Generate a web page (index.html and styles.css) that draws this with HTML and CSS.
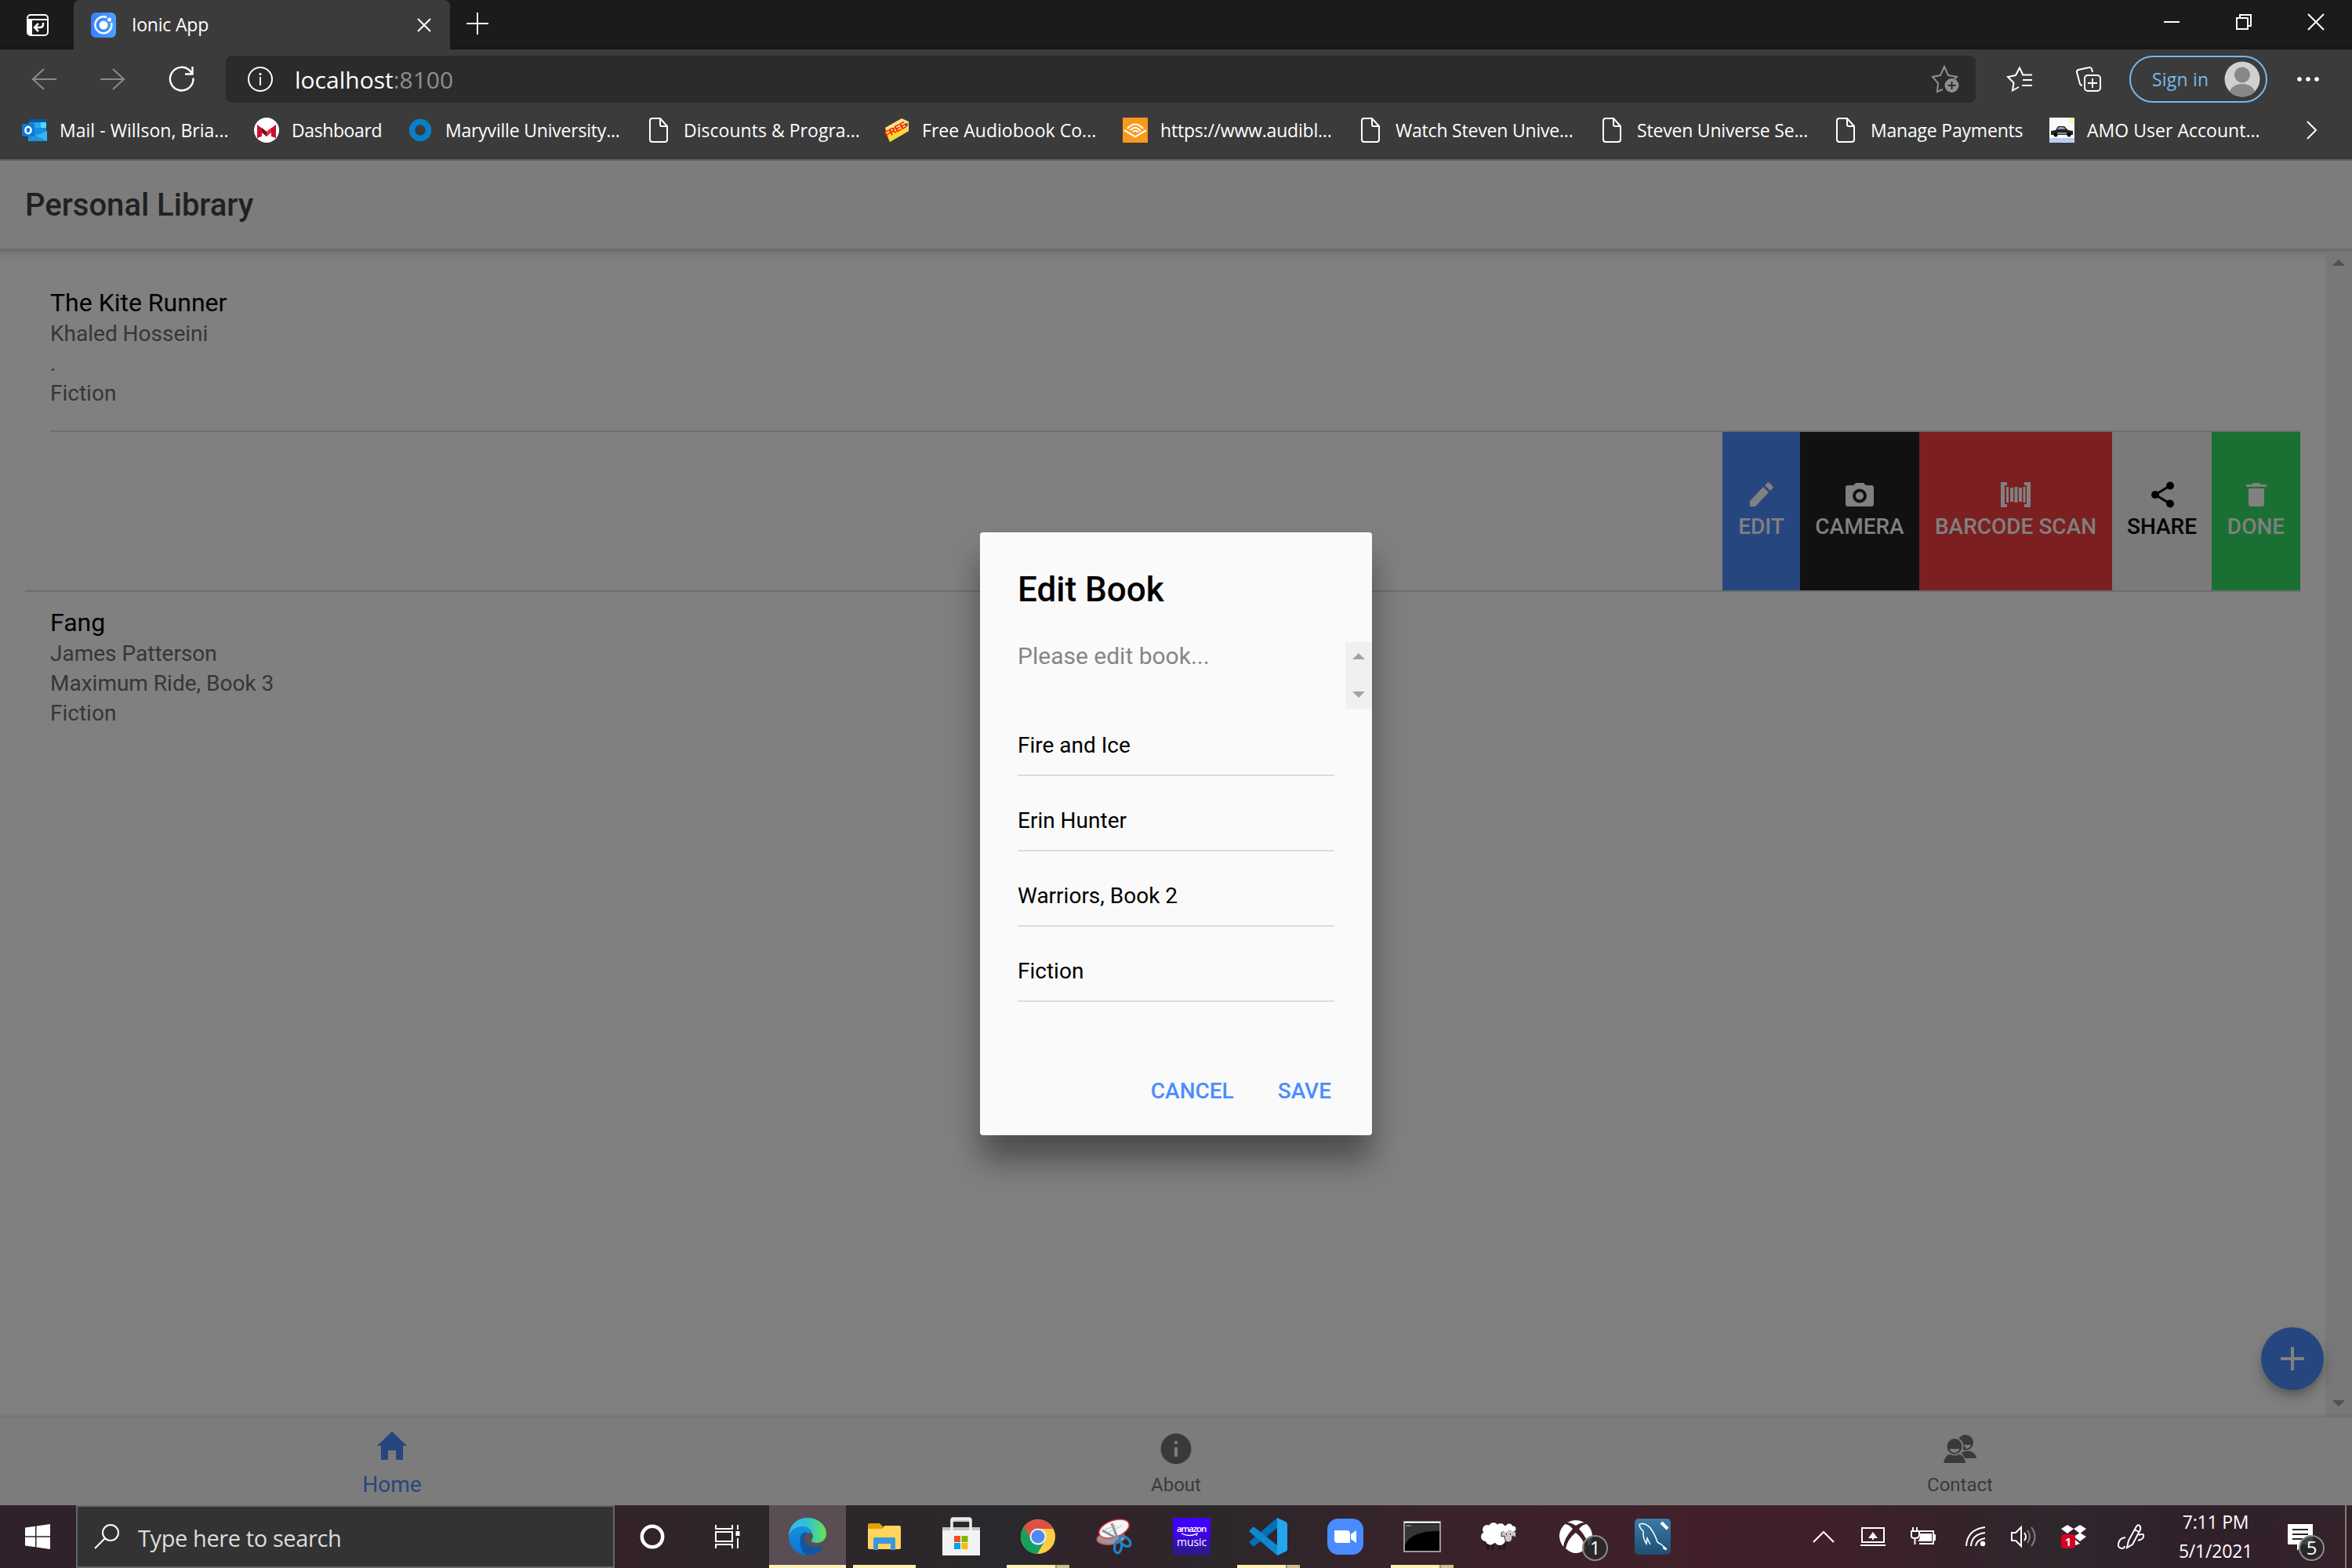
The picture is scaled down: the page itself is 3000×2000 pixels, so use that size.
FILE: index.html
```html
<!DOCTYPE html>
<html lang="en">
<head>
<meta charset="utf-8">
<title>Ionic App</title>
<link rel="stylesheet" href="styles.css">
</head>
<body>
<div class="screen">
  <header class="tabstrip">
    <svg class="tab-actions" width="28" height="28" viewBox="0 0 28 28" fill="none" stroke="#fff" stroke-width="2"><rect x="1" y="1" width="26" height="26" rx="4"/><path d="M1 7h26M6 7v20" stroke-width="2"/><path d="M2 8h4v18H2z" fill="#fff" stroke="none"/><path d="M21 11v2q0 4-4 4h-6M15 12l-5 5 5 5" stroke-width="2.500"/></svg>
    <div class="tab">
      <svg width="32" height="32" viewBox="0 0 32 32"><defs><linearGradient id="ion"><stop offset="0" stop-color="#3880ff"/><stop offset="1" stop-color="#4c9fff"/></linearGradient></defs><rect width="32" height="32" rx="6" fill="url(#ion)"/><circle cx="16" cy="16" r="5.500" fill="#fff"/><path d="M20 6.200A10.500 10.500 0 1 0 26 13" fill="none" stroke="#fff" stroke-width="2.400"/><circle cx="23.500" cy="9" r="2.500" fill="#fff"/></svg>
      <span class="tab-title">Ionic App</span>
      <svg class="tab-close" width="18" height="18" viewBox="0 0 18 18" stroke="#fff" stroke-width="2"><path d="M1 1l16 16M17 1L1 17"/></svg>
    </div>
    <svg class="new-tab" width="28" height="28" viewBox="0 0 28 28" stroke="#fff" stroke-width="2"><path d="M14 0v28M0 14h28"/></svg>
    <div class="window-buttons">
      <svg width="20" height="20" viewBox="0 0 20 20" stroke="#fff" stroke-width="2"><path d="M0 10h20"/></svg>
      <svg width="20" height="20" viewBox="0 0 20 20" fill="none" stroke="#fff" stroke-width="2"><path d="M1 5h14v14H1zM5 5V1h14v14h-4"/></svg>
      <svg width="20" height="20" viewBox="0 0 20 20" stroke="#fff" stroke-width="2"><path d="M0 0l20 20M20 0L0 20"/></svg>
    </div>
  </header>

  <div class="toolbar">
    <div class="nav-buttons">
      <svg width="32" height="28" viewBox="0 0 32 28" fill="none" stroke="#8b8b8b" stroke-width="2"><path d="M16 1L2 14l14 13M1 14h31"/></svg>
      <svg width="32" height="28" viewBox="0 0 32 28" fill="none" stroke="#8b8b8b" stroke-width="2"><path d="M16 1l14 13-14 13M31 14H0"/></svg>
      <svg width="32" height="32" viewBox="0 0 32 32" fill="none" stroke="#fff" stroke-width="2.400"><path d="M30.500 14.500A14.800 14.800 0 1 1 27 6l2 3M29.500 0v9.500H20"/></svg>
    </div>
    <div class="address">
      <svg width="32" height="32" viewBox="0 0 32 32" fill="none" stroke="#fff" stroke-width="2"><circle cx="16" cy="16" r="15"/><path d="M16 13v11"/><circle cx="16" cy="9.500" r="1.600" fill="#fff" stroke="none"/></svg>
      <span class="url">localhost<span class="port">:8100</span></span>
      <svg class="add-star" width="36" height="36" viewBox="0 0 36 36" fill="none" stroke="#8f8f8f" stroke-width="2"><path d="M14 31l-7 3 1-11-7-8 10-2 5-11 5 11 11 2-3 3"/><circle cx="25.500" cy="26" r="9" fill="#8f8f8f" stroke="none"/><path d="M25.500 21v10M20.500 26h10" stroke="#2b2b2b"/></svg>
    </div>
    <svg class="favorites" width="32" height="32" viewBox="0 0 32 32" fill="none" stroke="#fff" stroke-width="2"><path d="M15 26l-8 4.500 1.500-10L1 13l10-2 5-9.500 4 8.500M19 10.500h13M20 17h12M19 24h13"/></svg>
    <svg class="collections" width="32" height="32" viewBox="0 0 32 32" fill="none" stroke="#fff" stroke-width="2"><rect x="11" y="11" width="20" height="20" rx="4"/><path d="M21 15v12M15 21h12M21 7l-1-4q-1-2.500-3-2L3 4Q.5 5 1 7l4 15q1 2 3 2"/></svg>
    <div class="signin"><span>Sign in</span>
      <svg width="46" height="46" viewBox="0 0 46 46"><defs><clipPath id="av"><circle cx="23" cy="23" r="22.500"/></clipPath></defs><circle cx="23" cy="23" r="22.500" fill="#d2d0ce"/><g fill="#8a8886" clip-path="url(#av)"><circle cx="23" cy="17.500" r="10"/><ellipse cx="23" cy="43" rx="17" ry="14"/></g></svg>
    </div>
    <svg class="more" width="28" height="8" viewBox="0 0 28 8" fill="#fff"><circle cx="3" cy="4" r="2.800"/><circle cx="14" cy="4" r="2.800"/><circle cx="25" cy="4" r="2.800"/></svg>
  </div>

  <nav class="bookmarks">
    <div class="bookmark loose"><svg width="32" height="32" viewBox="0 0 32 32"><path d="M9 2h22v26H9z" fill="#1490df"/><path d="M9 2h22v4H9z" fill="#0858a8"/><path d="M16 6h8v7h-8z" fill="#28a8ea"/><path d="M24 6h7v7h-7z" fill="#50d9ff"/><path d="M8 17l12 6 12-6v13H8z" fill="#1d93e0"/><path d="M32 17v13L18 23z" fill="#35b8f1"/><rect y="8" width="16" height="16" rx="1.500" fill="#0f78d4"/><ellipse cx="8" cy="16" rx="3.600" ry="4.200" fill="none" stroke="#fff" stroke-width="2.400"/></svg><span>Mail - Willson, Bria...</span></div>
    <div class="bookmark tight"><svg width="32" height="32" viewBox="0 0 32 32"><circle cx="16" cy="16" r="16" fill="#fff"/><path d="M4 9l12 9v6l-6-5v5l-6 2z" fill="#c8102e"/><path d="M28 9l-12 9v6l6-5v5l6 2z" fill="#c8102e"/><path d="M10 13l6 5v6l-6-5z" fill="#7a0c1e"/><path d="M22 13l-6 5v6l6-5z" fill="#e22b42"/></svg><span>Dashboard</span></div>
    <div class="bookmark"><svg width="32" height="32" viewBox="0 0 32 32"><circle cx="16" cy="16" r="10.500" fill="none" stroke="#0a7fc6" stroke-width="7.500"/></svg><span>Maryville University...</span></div>
    <div class="bookmark loose"><svg class="page" width="32" height="32" viewBox="0 0 32 32"><path d="M8 1h10l9 10v17q0 3-3 3H8q-3 0-3-3V4q0-3 3-3zM18 1v8q0 2 2 2h7"/></svg><span>Discounts &amp; Progra...</span></div>
    <div class="bookmark loose"><svg width="32" height="32" viewBox="0 0 32 32"><path d="M1 13L22 1l9 4v12L7 31z" fill="#ffe082"/><path d="M1 17l26-6 4 6L7 31z" fill="#fdd835"/><circle cx="28" cy="9" r="2" fill="#555"/><text x="2" y="26" class="free-tag" transform="rotate(-29 3 25)">FREE</text></svg><span>Free Audiobook Co...</span></div>
    <div class="bookmark"><svg width="32" height="32" viewBox="0 0 32 32"><path d="M0 0h32v32H0z" fill="#f8991c"/><g fill="none" stroke="#fff" stroke-width="2.200"><path d="M2 16l14 8.500L30 16"/><path d="M6 14q10-11 20 0M9.500 16q7-7 13 1M13 18q4-3 6.500 1"/></g></svg><span>https://www.audibl...</span></div>
    <div class="bookmark"><svg class="page" width="32" height="32" viewBox="0 0 32 32"><path d="M8 1h10l9 10v17q0 3-3 3H8q-3 0-3-3V4q0-3 3-3zM18 1v8q0 2 2 2h7"/></svg><span>Watch Steven Unive...</span></div>
    <div class="bookmark"><svg class="page" width="32" height="32" viewBox="0 0 32 32"><path d="M8 1h10l9 10v17q0 3-3 3H8q-3 0-3-3V4q0-3 3-3zM18 1v8q0 2 2 2h7"/></svg><span>Steven Universe Se...</span></div>
    <div class="bookmark"><svg class="page" width="32" height="32" viewBox="0 0 32 32"><path d="M8 1h10l9 10v17q0 3-3 3H8q-3 0-3-3V4q0-3 3-3zM18 1v8q0 2 2 2h7"/></svg><span>Manage Payments</span></div>
    <div class="bookmark loose"><svg width="32" height="32" viewBox="0 0 32 32"><path d="M0 0h32v32H0z" fill="#fafafa"/><path d="M24 0h8v7h-6z" fill="#fff2b8"/><path d="M0 26h32v6H0z" fill="#b9cdf2"/><path d="M2 17l6-1 3-5h8l5 5 6 1v5H2z" fill="#222"/><path d="M10 15l2-3h6l3 3z" fill="#998fb0"/><path d="M10 19h12v2H10z" fill="#7d9a8c"/><circle cx="8" cy="22" r="2.500"/><circle cx="25" cy="22" r="2.500"/></svg><span>AMO User Account...</span></div>
    <svg class="overflow" width="14" height="24" viewBox="0 0 14 24" fill="none" stroke="#fff" stroke-width="2"><path d="M1 1l11 11L1 23"/></svg>
  </nav>

  <main class="app">
    <div class="app-header"><h1>Personal Library</h1></div>
    <div class="content">
      <div class="list">
        <div class="item first"><h2>The Kite Runner</h2><p>Khaled Hosseini</p><p>.</p><p>Fiction</p></div>
        <div class="item options">
          <div class="option edit"><svg width="34" height="34" viewBox="0 0 34 34"><path d="M2 25v7h7l17-18-7-7zM21 5l7 7 3-3q1.500-1.500 0-3l-4-4q-1.500-1.500-3 0z"/></svg>Edit</div>
          <div class="option camera"><svg width="36" height="34" viewBox="0 0 36 34"><path fill-rule="evenodd" d="M13 2h10l3 3h7q3 0 3 3v21q0 3-3 3H3q-3 0-3-3V8q0-3 3-3h7zM18 9.500a9 9 0 1 0 0 18 9 9 0 0 0 0-18zm0 4a5 5 0 1 1 0 10 5 5 0 0 1 0-10z"/></svg>Camera</div>
          <div class="option barcode"><svg width="38" height="34" viewBox="0 0 38 34"><path d="M0 1h8v4H5v24h3v4H0zM38 1h-8v4h3v24h-3v4h8zM7 7h3v20H7zM12 8h4v18h-4zM17.500 7h4v20h-4zM23 8h4v18h-4zM28.500 7h3v20h-3z"/></svg>Barcode Scan</div>
          <div class="option share"><svg width="32" height="34" viewBox="0 0 32 34"><circle cx="7" cy="17" r="5"/><circle cx="26" cy="5.500" r="5"/><circle cx="26" cy="28.500" r="5"/><path d="M26 5.500L7 17l19 11.500" fill="none" stroke="#000" stroke-width="3"/></svg>Share</div>
          <div class="option done"><svg width="28" height="34" viewBox="0 0 28 34"><path d="M1 7V4h7l2-2h8l2 2h7v3zM4 9h20v20q0 3-3 3H7q-3 0-3-3z"/></svg>Done</div>
        </div>
        <div class="item"><h2>Fang</h2><p>James Patterson</p><p>Maximum Ride, Book 3</p><p>Fiction</p></div>
      </div>
      <div class="scrollbar"><i class="up"></i><i class="down"></i></div>
      <button class="fab"><svg width="32" height="32" viewBox="0 0 32 32" stroke="#808080" stroke-width="4"><path d="M16 1v30M1 16h30"/></svg></button>
    </div>
    <div class="app-tabs">
      <div class="app-tab selected"><svg width="48" height="48" viewBox="0 0 48 48"><path d="M10 40V22H5L24 4l19 18h-5v18h-9V28H19v12z"/></svg><span>Home</span></div>
      <div class="app-tab"><svg width="48" height="48" viewBox="0 0 48 48"><path fill-rule="evenodd" d="M24 6.500a19.500 19.500 0 1 0 0 39 19.500 19.500 0 0 0 0-39zM22 16h4v4h-4zM22 24h4v12h-4z"/></svg><span>About</span></div>
      <div class="app-tab"><svg width="48" height="48" viewBox="0 0 48 48"><ellipse cx="31" cy="18" rx="10" ry="10"/><path d="M26 31q5-3 11-2 7 2 8 9H30z"/><path d="M29 21h9q-1 4-6 5z" fill="#7c7c7c"/><ellipse cx="17" cy="23" rx="11.500" ry="11.500" fill="#7c7c7c"/><ellipse cx="17" cy="23" rx="9.500" ry="10"/><path d="M10.500 26h13q-2 5-6.500 5t-6.500-5z" fill="#7c7c7c"/><path d="M3 44q2-10 8-11 6 3 12 0 6 1 8 11z"/></svg><span>Contact</span></div>
    </div>

    <section class="dialog">
      <h2>Edit Book</h2>
      <div class="message"><span>Please edit book...</span><div class="message-scroll"><i class="up"></i><i class="down"></i></div></div>
      <div class="fields">
        <div class="field">Fire and Ice</div>
        <div class="field">Erin Hunter</div>
        <div class="field">Warriors, Book 2</div>
        <div class="field">Fiction</div>
      </div>
      <div class="dialog-buttons"><span>Cancel</span><span>Save</span></div>
    </section>
  </main>

  <footer class="taskbar">
    <div class="start"><svg width="32" height="32" viewBox="0 0 32 32" fill="#fff"><path d="M0 4.500l13-1.800V15.300H0zM14.500 2.500L32 0v15.300H14.500zM0 16.700h13v12.600L0 27.500zM14.500 16.700H32V32l-17.500-2.500z"/></svg></div>
    <div class="search"><svg width="32" height="32" viewBox="0 0 32 32" fill="none" stroke="#fff" stroke-width="2"><circle cx="21" cy="11" r="10"/><path d="M14 18L1 31"/></svg><span>Type here to search</span></div>
    <div class="sys"><svg width="34" height="34" viewBox="0 0 34 34" fill="none" stroke="#fff" stroke-width="4.500"><circle cx="17" cy="17" r="13.200"/></svg></div>
    <div class="sys"><svg width="34" height="30" viewBox="0 0 34 30" fill="none" stroke="#fff" stroke-width="2"><path d="M2 0v5h21V0M2 30v-5h21v5M2 9h21v12H2zM30 0v6M30 17v13"/><path d="M27.500 8h5v6h-5z" fill="#fff" stroke="none"/></svg></div>
    <div class="apps">
      <div class="task active wide"><svg width="48" height="48" viewBox="0 0 48 48"><defs><linearGradient id="e1" x1="0" x2="1"><stop offset="0" stop-color="#35b8f5"/><stop offset=".5" stop-color="#2cc3d0"/><stop offset="1" stop-color="#6be450"/></linearGradient><linearGradient id="e2" x1="0" y1="0" x2="0" y2="1"><stop offset="0" stop-color="#1790dc"/><stop offset="1" stop-color="#0b74d4"/></linearGradient></defs><path d="M0 24C0 9 11 0 24 0s24 9 24 20c0 8-6 12-12 12-7 0-8-2-6-5 3-6-2-14-12-15C9 11 3 15 0 24z" fill="url(#e1)"/><path d="M0 24C2 16 9 11 17 11c8 0 13 5 13 10-4-4-11-1-11 6 0 10 8 17 17 17-4 3-8 4-12 4C11 48 0 37 0 24z" fill="url(#e2)"/><path d="M15 24c1-3 4-6 9-5-5 3-5 9-2 13 5 6 14 7 21 4 1-.5 2 0 1 1-4 7-12 11-19 11-7-1-12-10-10-24z" fill="#1155a4"/></svg></div>
      <div class="task open"><svg width="42" height="36" viewBox="0 0 42 36"><path d="M0 3q0-2 2-2h13l4 4v4H0z" fill="#e3a008"/><path d="M0 8h18l3-4h19q2 0 2 2v26q0 2-2 2H2q-2 0-2-2z" fill="#ffd55e"/><path d="M7 35V21q0-2 2-2h24q2 0 2 2v14h-6v-8H13v8z" fill="#3a96dd"/></svg></div>
      <div class="task"><svg width="48" height="48" viewBox="0 0 48 48"><path d="M0 12h48v5H0z" fill="#c4c4c4"/><path d="M12 2h24v3H12z" fill="#ccc"/><path d="M12 17V3q0-2 2-2h20q2 0 2 2v14" fill="none" stroke="#eee" stroke-width="3.500"/><path d="M0 16h48v32H0z" fill="#f2f2f2"/><path d="M15 23h8v8h-8z" fill="#f25022"/><path d="M24.500 23h8v8h-8z" fill="#7fba00"/><path d="M15 32h8v8h-8z" fill="#00a4ef"/><path d="M24.500 32h8v8h-8z" fill="#ffb900"/></svg></div>
      <div class="task open stacked"><svg width="44" height="44" viewBox="0 0 44 44"><circle cx="22" cy="22" r="22" fill="#ffcd42"/><path d="M22 22L4 9.500A22 22 0 0 0 21 44l10-17z" fill="#16a05d"/><path d="M22 12h19.500A22 22 0 0 0 4 9.500L13 26z" fill="#dd5144"/><circle cx="22" cy="22" r="10.500" fill="#f1f1f1"/><circle cx="22" cy="22" r="8.500" fill="#4c8bf5"/></svg></div>
      <div class="task"><svg width="46" height="46" viewBox="0 0 46 46"><ellipse cx="18" cy="25" rx="18" ry="8" fill="#999" stroke="#d6454a" stroke-width="1.500" transform="rotate(-6 18 25)"/><ellipse cx="22" cy="13" rx="20" ry="10.500" fill="#f5f5f5" stroke="#e0383e" stroke-width="1.500" transform="rotate(-20 22 13)"/><path d="M19 6l7 18M7 15l20 11" stroke="#8b9299" stroke-width="3"/><path d="M10 14l15-5M14 18l18-9" stroke="#bbb"/><g fill="none" stroke="#1b87cc" stroke-width="3.200"><ellipse cx="27" cy="36" rx="4.500" ry="8" transform="rotate(8 27 36)"/><ellipse cx="36" cy="29" rx="5" ry="8" transform="rotate(-50 36 29)"/></g></svg></div>
      <div class="task"><svg width="48" height="48" viewBox="0 0 48 48"><defs><linearGradient id="am" x1="0" y1="0" x2="0" y2="1"><stop offset="0.300" stop-color="#4100fa"/><stop offset="1" stop-color="#2b1c80"/></linearGradient></defs><path d="M0 0h48v48H0z" fill="url(#am)"/><text class="am-small" x="24" y="18" textLength="38">amazon</text><path d="M11 20q11 5 20 0l-1 3" fill="none" stroke="#fff" stroke-width="1.300"/><text class="am-big" x="24" y="36" textLength="38">music</text></svg></div>
      <div class="task open stacked"><svg width="48" height="48" viewBox="0 0 48 48"><path d="M35 0v13L6 36q-1 1-2 0l-4-4q-1-1 0-2z" fill="#0070b5"/><path d="M35 48V35L6 12q-1-1-2 0l-4 4q-1 1 0 2z" fill="#1088d0"/><path d="M35 0l11 5q2 1 2 3v32q0 2-2 3l-11 5z" fill="#24a5ef"/></svg></div>
      <div class="task"><svg width="46" height="46" viewBox="0 0 46 46"><rect width="46" height="46" rx="14" fill="#4a8cff"/><path d="M9 15h16q4 0 4 4v12H13q-4 0-4-4zM30 20l7-5v16l-7-5z" fill="#fff"/></svg></div>
      <div class="task open stacked"><svg width="48" height="40" viewBox="0 0 48 40"><path d="M1 1h46v38H1z" fill="#000" stroke="#9a9a9a" stroke-width="2"/><path d="M1 1h46v2H1z" fill="#e9eef2"/><path d="M2 4h44v9Q12 12 2 30z" fill="#363636"/><path d="M3 6h7" stroke="#aaa"/></svg></div>
      <div class="task"><svg width="46" height="36" viewBox="0 0 46 36"><path d="M7 26h4v9H7zM13 26h4v9h-4zM22 26h4v9h-4zM28 26h3v9h-3z" fill="#1d1b1b"/><g fill="#fff"><circle cx="8" cy="9" r="6"/><circle cx="16" cy="6" r="6"/><circle cx="25" cy="7" r="6"/><circle cx="6" cy="18" r="6"/><circle cx="12" cy="22" r="6.500"/><circle cx="24" cy="22" r="7"/><path d="M7 8h22v18H7z"/></g><path d="M26 13l5-3h9l5 3-1 6-4-2q0 8-5 8t-5-8l-4 1z" fill="#cfc8c2" stroke="#333"/><g fill="#fff"><circle cx="31" cy="8" r="4"/><circle cx="36" cy="6" r="4.500"/><circle cx="41" cy="8" r="3.500"/></g><path d="M32 15h1M37 15h1" stroke="#222" stroke-width="2"/></svg></div>
      <div class="task"><svg width="42" height="42" viewBox="0 0 42 42" fill="#fff"><path d="M10 3Q21-3 32 3q-5 0-11 4Q15 3 10 3zM7 5q5 0 10 6Q6 23 5 34-6 18 7 5zM35 5q13 13 2 29Q36 23 25 11q5-6 10-6zM21 16q9 7 13 20-13 12-26 0 3-13 13-20z"/></svg><b class="badge">1</b></div>
      <div class="task"><svg width="46" height="46" viewBox="0 0 46 46"><defs><linearGradient id="my" x1="0" y1="0" x2="0" y2="1"><stop offset="0" stop-color="#3a7ca8"/><stop offset="1" stop-color="#1c4f70"/></linearGradient></defs><rect width="46" height="46" rx="5" fill="url(#my)"/><path d="M6 7q8-2 14 5 6 8 9 18l5 3 7 6-5-2 4 3M6 7q0 5 5 9-1 8 4 16l1-7 4 8" fill="none" stroke="#fff" stroke-width="1.500"/><path d="M34 5l4 4M36 7l6 6" stroke="#fff" stroke-width="4"/></svg></div>
    </div>
    <div class="tray">
      <svg width="28" height="16" viewBox="0 0 28 16" fill="none" stroke="#fff" stroke-width="2"><path d="M1 15L14 2l13 13"/></svg>
      <svg width="32" height="24" viewBox="0 0 32 24" fill="none" stroke="#fff" stroke-width="2"><path d="M2 1h28v18H2zM0 23h32M16 10v6"/><path d="M16 6l6 8H10z" fill="#fff" stroke="none"/></svg>
      <svg width="32" height="24" viewBox="0 0 32 24" fill="none" stroke="#fff" stroke-width="2"><path d="M12 5h17v16H11M31 9v8M3 0v5M8 0v5M0 5h11v5q0 4-5.500 4T1 10V5M5.500 14v8"/><path d="M12 8h15v10H9q4-4 3-10z" fill="#fff" stroke="none"/></svg>
      <svg width="26" height="26" viewBox="0 0 26 26" fill="none" stroke="#fff" stroke-width="2"><path d="M1 25Q2 4 25 1M7 25Q8 10 25 8M13 25q1-8 12-10"/><circle cx="22" cy="22" r="3.200" fill="#fff" stroke="none"/></svg>
      <svg width="34" height="28" viewBox="0 0 34 28" fill="none" stroke="#fff" stroke-width="2"><path d="M1 9h5l7-7v24l-7-7H1z"/><path d="M17 9q4 5 0 10"/><path d="M21 6q6 8 0 16M26 2q9 12 0 24" stroke="#8b7d83"/></svg>
      <svg width="32" height="32" viewBox="0 0 32 32"><path d="M8 1l8 5-8 6-8-6zM24 1l8 5-8 6-8-6zM24 11l8 5-8 6-8-6zM18 20l6 5-6 2z" fill="#fff"/><rect y="13" width="18" height="18" rx="4" fill="#d9001f"/><text x="9" y="27.500" class="dropbox-count">1</text></svg>
      <svg width="34" height="32" viewBox="0 0 34 32" fill="none" stroke="#fff" stroke-width="2"><path d="M12 30l2-9L24 3q2-3 4-1t1 5L19 26zM22 7l5 3M10 17q-8 1-9 8-1 5 4 6 4 0 4-3M27 14q7-3 6 2 0 3-7 5"/></svg>
    </div>
    <div class="clock"><span>7:11 PM</span><span>5/1/2021</span></div>
    <div class="notify"><svg width="32" height="34" viewBox="0 0 32 34"><path d="M0 0h32v26H19l-7 8v-8H0z" fill="#fff"/><path d="M6 7h20M6 13h20M6 19h13" stroke="#302229" stroke-width="2"/></svg><b class="badge">5</b></div>
    <div class="show-desktop"></div>
  </footer>
</div>
</body>
</html>
```

FILE: styles.css
```css
* { box-sizing: border-box; }
body { margin: 0; }
h1, h2, p { margin: 0; font-weight: 400; }
svg { display: block; flex: none; overflow: visible; }

.screen {
  width: 3000px;
  height: 2000px;
  display: flex;
  flex-direction: column;
  overflow: hidden;
  font-family: "Open Sans", "Noto Sans", sans-serif;
  font-size: 23px;
  letter-spacing: -0.2px;
  color: #fff;
  background: #3b3b3b;
  white-space: nowrap;
}

/* Browser chrome */
.tabstrip {
  height: 63px;
  display: flex;
  align-items: center;
  background: linear-gradient(#1b1b1b 58px, #151515);
  padding-left: 34px;
}
.tab {
  width: 480px;
  height: 63px;
  margin-left: 32px;
  padding: 0 24px 0 22px;
  display: flex;
  align-items: center;
  border-radius: 8px 8px 0 0;
  background: #3b3b3b;
}
.tab-title { margin-left: 20px; padding-bottom: 2px; }
.tab-close { margin-left: auto; }
.new-tab { margin: 0 0 3px 21px; }
.window-buttons {
  margin-left: auto;
  padding: 0 36px 7px 0;
  display: flex;
  gap: 72px;
}

.toolbar {
  height: 76px;
  display: flex;
  align-items: center;
  padding-left: 40px;
}
.nav-buttons {
  width: 248px;
  display: flex;
  align-items: center;
  gap: 56px;
}
.address {
  width: 2232px;
  height: 60px;
  display: flex;
  align-items: center;
  padding: 0 20px 0 28px;
  border-radius: 8px;
  background: #2b2b2b;
}
.url {
  margin-left: 28px;
  font-size: 30px;
  letter-spacing: 0;
}
.port { color: #8f8f8f; }
.add-star { margin-left: auto; }
.favorites { margin-left: 40px; }
.collections { margin-left: 56px; }
.signin {
  width: 176px;
  height: 60px;
  margin-left: 36px;
  padding: 0 7px 0 27px;
  display: flex;
  align-items: center;
  justify-content: space-between;
  border: 2px solid #76b9ed;
  border-radius: 30px;
  color: #76b9ed;
  letter-spacing: 0.2px;
}
.more { margin-left: 38px; }

.bookmarks {
  height: 66px;
  padding: 0 0 10px 28px;
  display: grid;
  grid-template-columns: 296px 196px 304px 304px 304px 300px 308px 298px 276px 328px 14px;
  align-items: center;
  border-bottom: 2px solid #606060;
}
.bookmark {
  display: flex;
  align-items: center;
  gap: 16px;
}
.loose { letter-spacing: 0.03px; }
.tight { letter-spacing: -0.4px; }
.page { fill: none; stroke: #fff; stroke-width: 2; }
.free-tag { font: bold 12px "Liberation Sans", sans-serif; fill: #e11; letter-spacing: -0.5px; }

/* Library app, dimmed behind the dialog */
.app {
  position: relative;
  flex: none;
  height: 1715px;
  display: flex;
  flex-direction: column;
  font-family: Roboto, sans-serif;
  letter-spacing: 0;
  background: #808080;
  color: #000;
}
.app-header {
  height: 112px;
  padding-left: 32px;
  background: #7c7c7c;
}
.app-header h1 {
  font-size: 40px;
  font-weight: 500;
  line-height: 114px;
  color: #212121;
}
.content {
  position: relative;
  height: 1491px;
  display: flex;
  background: linear-gradient(#6a6a6a, #787878 7px, #808080 14px, #808080 1485px, #737373);
}
.list {
  width: 2966px;
  padding: 30px 32px 0;
}
.item {
  height: 204px;
  padding: 20px 0 0 32px;
}
.item.first {
  margin-left: 32px;
  padding-left: 0;
  border-bottom: 2px solid #6d6d6d;
}
.item h2 {
  margin-bottom: 2px;
  font-size: 32px;
  line-height: 38px;
}
.item p {
  font-size: 28px;
  line-height: 38px;
  color: #363636;
}
.item.options {
  padding: 0;
  display: flex;
  justify-content: flex-end;
  border-bottom: 2px solid #6d6d6d;
}
.option {
  display: flex;
  flex-direction: column;
  align-items: center;
  padding-top: 63px;
  font-size: 28px;
  font-weight: 500;
  line-height: 48px;
  text-transform: uppercase;
  color: #808080;
  fill: #808080;
}
.edit { width: 99px; background: #26467f; }
.camera { width: 152px; background: #111; }
.barcode { width: 246px; background: #7c1f20; }
.share { width: 127px; background: #7a7a7a; color: #000; fill: #000; }
.done { width: 113px; background: #1a7032; }

.scrollbar {
  width: 34px;
  padding: 14px 9px;
  display: flex;
  flex-direction: column;
  justify-content: space-between;
  background: linear-gradient(#6a6a6a, #787878 7px, #787878 1485px, #707070);
}
.up, .down { width: 16px; height: 8px; background: #505050; }
.up { clip-path: polygon(0 100%, 50% 0, 100% 100%); }
.down { clip-path: polygon(0 0, 50% 100%, 100% 0); }
.fab {
  position: absolute;
  right: 36px;
  bottom: 35px;
  width: 80px;
  height: 80px;
  padding: 0;
  display: grid;
  place-items: center;
  border: 0;
  border-radius: 50%;
  background: #26467f;
  box-shadow: 0 6px 10px -2px rgba(0, 0, 0, .2), 0 10px 20px rgba(0, 0, 0, .18);
}

.app-tabs {
  height: 112px;
  display: flex;
  background: #7c7c7c;
}
.app-tab {
  flex: 1;
  padding-top: 14px;
  display: flex;
  flex-direction: column;
  align-items: center;
  gap: 8px;
  font-size: 24px;
  line-height: 32px;
  color: #3a3a3a;
  fill: #3a3a3a;
}
.selected { font-size: 28px; color: #26467f; fill: #26467f; }

/* Edit dialog */
.dialog {
  position: absolute;
  left: 1250px;
  top: 474px;
  width: 500px;
  height: 769px;
  padding: 47px 0 20px 48px;
  display: flex;
  flex-direction: column;
  border-radius: 4px;
  background: #fafafa;
  box-shadow: 0 32px 40px rgba(0, 0, 0, .4);
}
.dialog h2 {
  margin-bottom: 41px;
  font-size: 44px;
  font-weight: 500;
  line-height: 52px;
}
.message {
  height: 85px;
  display: flex;
  justify-content: space-between;
  font-size: 30px;
  line-height: 36px;
  color: #868686;
}
.message-scroll {
  width: 34px;
  padding: 14px 9px;
  display: flex;
  flex-direction: column;
  justify-content: space-between;
  background: #f0f0f0;
}
.message-scroll i { background: #a3a3a3; }
.fields {
  width: 404px;
  padding-top: 10px;
  display: flex;
  flex-direction: column;
  gap: 20px;
}
.field {
  height: 76px;
  font-size: 28px;
  line-height: 74px;
  border-bottom: 2px solid #dcdcdc;
}
.dialog-buttons {
  margin-top: auto;
  padding-right: 52px;
  display: flex;
  justify-content: flex-end;
  gap: 56px;
  font-size: 28px;
  font-weight: 500;
  line-height: 72px;
  text-transform: uppercase;
  color: #4c8dff;
}

/* Windows taskbar */
.taskbar {
  height: 80px;
  display: flex;
  align-items: center;
  background: linear-gradient(90deg, #30222a 0, #33222a 800px, #2d262a 950px, #2c272b 1200px, #282a2d 1270px, #33222a 1400px, #2c272b 1550px, #3a222b 1850px, #41202a 2150px, #40202a 2320px, #35222b 2500px, #30272d 2620px, #30202a 2800px, #33222a);
}
.start { width: 97px; padding-left: 32px; }
.search {
  width: 687px;
  height: 80px;
  padding-left: 21px;
  display: flex;
  align-items: center;
  gap: 24px;
  border: 2px solid #666;
  background: #333;
  font-size: 29px;
  letter-spacing: -0.4px;
  color: #dcdcdc;
}
.search span { padding-top: 2px; }
.sys { width: 96px; display: grid; place-items: center; }
.apps { margin-left: 5px; display: flex; }
.task {
  position: relative;
  width: 98px;
  height: 80px;
  display: grid;
  place-items: center;
}
.active { background: #5a4e54; }
.open::after, .active::after {
  content: "";
  position: absolute;
  left: 9px;
  right: 9px;
  bottom: 0;
  height: 4px;
  background: #fff0b5;
}
.active::after { left: 0; right: 0; }
.stacked::after { background: linear-gradient(90deg, #fff0b5 62px, #98906d 62px, #98906d 64px, #cbc08e 64px); }
.am-small, .am-big { font: 600 11.500px "Open Sans", sans-serif; fill: #fff; text-anchor: middle; }
.am-big { font-size: 14px; font-weight: 400; }
.badge {
  position: absolute;
  left: 57px;
  top: 38px;
  width: 33px;
  height: 33px;
  border: 2px solid #8b8b8b;
  border-radius: 50%;
  background: rgba(40, 40, 40, .88);
  font-size: 24px;
  font-weight: 400;
  line-height: 28px;
  text-align: center;
}
.tray {
  margin-left: 155px;
  width: 425px;
  display: grid;
  grid-template-columns: 61px 64px 70px 58px 64px 72px 36px;
  align-items: center;
}
.dropbox-count { font: bold 14px "Open Sans", sans-serif; fill: #fff; text-anchor: middle; }
.clock {
  width: 178px;
  height: 80px;
  padding-top: 3px;
  display: flex;
  flex-direction: column;
  text-align: center;
  line-height: 37px;
}
.notify {
  position: relative;
  width: 76px;
  height: 80px;
  padding: 24px 0 0 3px;
}
.notify .badge { left: 17px; }
.show-desktop { width: 2px; height: 80px; background: #85797e; }
```
